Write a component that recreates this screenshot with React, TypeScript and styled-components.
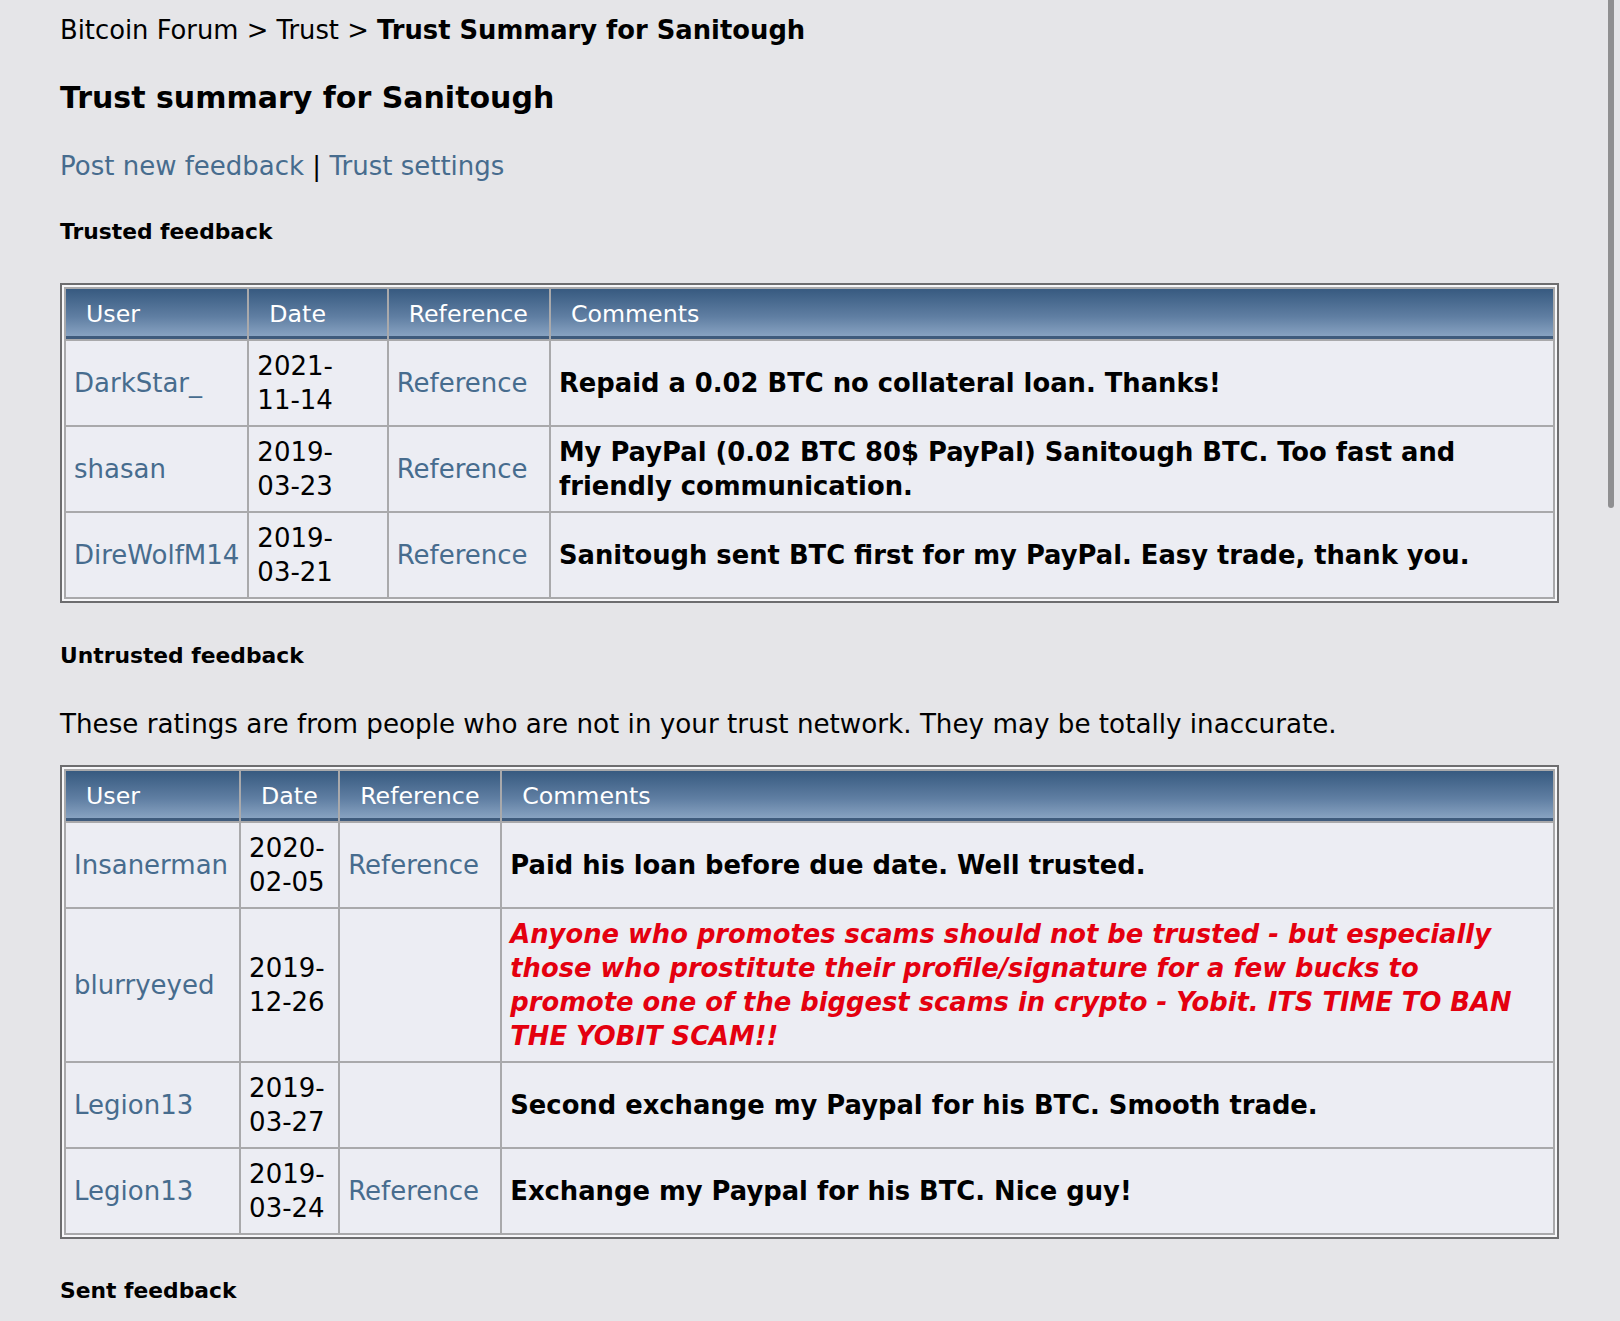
import styled, { createGlobalStyle } from 'styled-components';

interface FeedbackRow {
  user: string;
  date: string;
  reference: boolean;
  comment: string;
  flagged?: boolean;
}

const trusted: FeedbackRow[] = [
  { user: 'DarkStar_', date: '2021-11-14', reference: true, comment: 'Repaid a 0.02 BTC no collateral loan. Thanks!' },
  { user: 'shasan', date: '2019-03-23', reference: true, comment: 'My PayPal (0.02 BTC 80$ PayPal) Sanitough BTC. Too fast and friendly communication.' },
  { user: 'DireWolfM14', date: '2019-03-21', reference: true, comment: 'Sanitough sent BTC first for my PayPal. Easy trade, thank you.' },
];

const untrusted: FeedbackRow[] = [
  { user: 'Insanerman', date: '2020-02-05', reference: true, comment: 'Paid his loan before due date. Well trusted.' },
  {
    user: 'blurryeyed',
    date: '2019-12-26',
    reference: false,
    flagged: true,
    comment: 'Anyone who promotes scams should not be trusted - but especially those who prostitute their profile/signature for a few bucks to promote one of the biggest scams in crypto - Yobit. ITS TIME TO BAN THE YOBIT SCAM!!',
  },
  { user: 'Legion13', date: '2019-03-27', reference: false, comment: 'Second exchange my Paypal for his BTC. Smooth trade.' },
  { user: 'Legion13', date: '2019-03-24', reference: true, comment: 'Exchange my Paypal for his BTC. Nice guy!' },
];

const FeedbackTable = ({ rows, widths }: { rows: FeedbackRow[]; widths: number[] }) => (
  <Frame>
    <Table>
      <colgroup>
        {widths.map((w, i) => (
          <Col key={i} $w={w} />
        ))}
      </colgroup>
      <thead>
        <tr>
          <HeadCell>User</HeadCell>
          <HeadCell>Date</HeadCell>
          <HeadCell>Reference</HeadCell>
          <HeadCell>Comments</HeadCell>
        </tr>
      </thead>
      <tbody>
        {rows.map((r, i) => (
          <tr key={i}>
            <Cell><Link href="#">{r.user}</Link></Cell>
            <Cell><DateText>{r.date}</DateText></Cell>
            <Cell>{r.reference && <Link href="#">Reference</Link>}</Cell>
            <CommentCell>
              <Comment $flagged={r.flagged}>{r.comment}</Comment>
            </CommentCell>
          </tr>
        ))}
      </tbody>
    </Table>
  </Frame>
);

const App = () => {
  return (
    <>
      <GlobalStyle />
      <Page>
        <Crumbs>
          <Crumb href="#">Bitcoin Forum</Crumb> &gt; <Crumb href="#">Trust</Crumb> &gt; <b>Trust Summary for Sanitough</b>
        </Crumbs>
        <Title>Trust summary for Sanitough</Title>
        <Actions>
          <Link href="#">Post new feedback</Link> | <Link href="#">Trust settings</Link>
        </Actions>

        <SectionTitle $top={34}>Trusted feedback</SectionTitle>
        <Gap $h={36} />
        <FeedbackTable rows={trusted} widths={[181, 137, 160, 1000]} />

        <SectionTitle $top={38}>Untrusted feedback</SectionTitle>
        <Note>These ratings are from people who are not in your trust network. They may be totally inaccurate.</Note>
        <FeedbackTable rows={untrusted} widths={[173, 97, 160, 1050]} />

        <SectionTitle $top={37}>Sent feedback</SectionTitle>
      </Page>
      <ScrollThumb />
    </>
  );
};

export default App;

const GlobalStyle = createGlobalStyle`
  html {
    scrollbar-width: none;
  }
  body {
    margin: 0;
    background: #e5e5e8;
    color: #000;
    font-family: "DejaVu Sans", Verdana, sans-serif;
  }
`;

const Page = styled.div`
  padding: 13px 61px 0 60px;
  font-size: 26px;
  line-height: 34px;
`;

const Crumbs = styled.div`
  font-size: 25.8px;
  line-height: 34px;
`;

const Crumb = styled.a`
  color: #000;
  text-decoration: none;
`;

const Title = styled.h1`
  margin: 31px 0 0;
  font-size: 30px;
  line-height: 40px;
  font-weight: bold;
`;

const Actions = styled.div`
  margin-top: 31px;
`;

const Link = styled.a`
  color: #476c8e;
  text-decoration: none;
`;

const SectionTitle = styled.h3<{ $top: number }>`
  margin: ${p => p.$top}px 0 0;
  font-size: 21.8px;
  line-height: 30px;
  font-weight: bold;
`;

const Gap = styled.div<{ $h: number }>`
  height: ${p => p.$h}px;
`;

const Note = styled.p`
  margin: 36px 0 24px;
  font-size: 26.2px;
`;

const Frame = styled.div`
  border: 2px solid #6d6d6f;
  padding: 2px;
  background: #f7f7f9;
`;

const Table = styled.table`
  width: 100%;
  table-layout: fixed;
  border-collapse: separate;
  border-spacing: 2px;
  background: #a9a9ab;
`;

const Col = styled.col<{ $w: number }>`
  width: ${p => p.$w}px;
`;

const HeadCell = styled.th`
  padding: 8px 8px 8px 20px;
  text-align: left;
  font-weight: normal;
  font-size: 23.7px;
  line-height: 34px;
  color: #fff;
  background: linear-gradient(#375a80, #5f7ea2 55%, #8ea8c6);
  box-shadow: inset 0 -3px 0 #3f5b7c;
`;

const Cell = styled.td`
  padding: 8px;
  background: #ecedf3;
  vertical-align: middle;
  line-height: 34px;
`;

const CommentCell = styled(Cell)`
  padding-right: 20px;
`;

const DateText = styled.span`
  display: inline-block;
  max-width: 92px;
`;

const Comment = styled.span<{ $flagged?: boolean }>`
  font-size: 25.8px;
  font-weight: bold;
  font-style: ${p => (p.$flagged ? 'italic' : 'normal')};
  color: ${p => (p.$flagged ? '#e4000f' : '#000')};
`;

const ScrollThumb = styled.div`
  position: fixed;
  top: -6px;
  right: 6px;
  width: 6px;
  height: 514px;
  border-radius: 3px;
  background: #8f8f91;
`;
